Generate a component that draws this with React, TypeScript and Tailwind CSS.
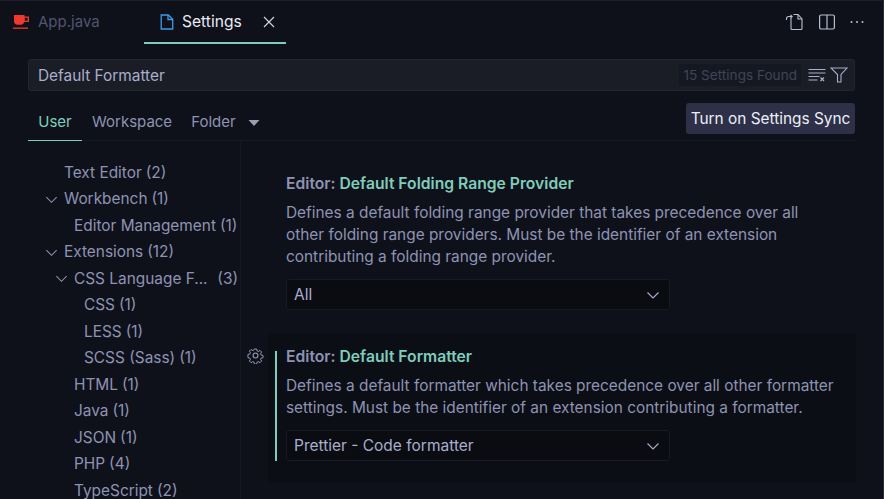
import React from "react";

const tree: [string, string, number, boolean][] = [
  ["Text Editor", "(2)", 64, false],
  ["Workbench", "(1)", 64, true],
  ["Editor Management", "(1)", 74, false],
  ["Extensions", "(12)", 64, true],
  ["CSS Language F...", "(3)", 74, true],
  ["CSS", "(1)", 84, false],
  ["LESS", "(1)", 84, false],
  ["SCSS (Sass)", "(1)", 84, false],
  ["HTML", "(1)", 74, false],
  ["Java", "(1)", 74, false],
  ["JSON", "(1)", 74, false],
  ["PHP", "(4)", 74, false],
  ["TypeScript", "(2)", 74, false],
];

function Chevron({ className = "", style }: { className?: string; style?: React.CSSProperties }) {
  return (
    <svg viewBox="0 0 16 16" className={className} style={style} fill="none" stroke="currentColor" strokeWidth="1.1">
      <path d="M2.5 5.5 8 11l5.5-5.500" />
    </svg>
  );
}

function Select({ label }: { label: string }) {
  return (
    <div className="flex h-[31px] w-[384px] items-center justify-between rounded-[3px] border border-[#171a24] bg-[#0a0c12] pl-[7px] pr-[8px] text-[15.500px] text-[#a9aecb]">
      <span>{label}</span>
      <Chevron className="h-4 w-4 text-[#a9aecb]" />
    </div>
  );
}

export default function App() {
  return (
    <div
      className="flex h-[499px] w-[884px] flex-col overflow-hidden border-t border-r border-t-[#1b1e29] border-r-[#2a2d38] bg-[#0e111a] text-[#8e93b3]"
      style={{ fontFamily: "Inter, 'Noto Sans', sans-serif" }}
    >
      {/* tabs */}
      <div className="flex h-[42px] shrink-0 items-start">
        <div className="flex h-[42px] w-[144px] items-center pl-[13px] text-[15px] text-[#50556f]">
          <svg viewBox="0 0 16 16" className="mr-[9px] h-4 w-4" fill="#f0392b">
            <path d="M1 1h10.500v1.500H16v5.500h-4.700c-.5 1.500-1.800 2.800-3.300 2.800H4.500C2.400 10.800 1 9 1 7.200zM11.800 3.800v3h2.800v-3z" />
            <rect x="0" y="13.500" width="15" height="1.300" />
          </svg>
          <span>App.java</span>
        </div>
        <div className="flex h-[43px] w-[142px] items-center border-b-2 border-[#7fcdbb] pl-[15px] text-[15.600px] text-[#e8eaf4]">
          <svg viewBox="0 0 16 16" className="mr-[7px] h-4 w-4" fill="none" stroke="#3b9be8" strokeWidth="1.300">
            <path d="M2.200 1h7.100l4.400 4.200V15H2.200z" />
            <path d="M9 1v4.500h4.700" />
          </svg>
          <span>Settings</span>
          <svg viewBox="0 0 16 16" className="ml-[19px] h-4 w-4" fill="none" stroke="#d5d8e6" strokeWidth="1.100">
            <path d="M3 3l10 10M13 3 3 13" />
          </svg>
        </div>
        <div className="ml-auto mr-[18px] flex h-[42px] items-center gap-[13px] text-[#b9bdd0]">
          <svg viewBox="0 0 20 20" className="h-[20px] w-[20px]" fill="none" stroke="currentColor" strokeWidth="1.100">
            <path d="M6 6V16.500a1 1 0 0 0 1 1h9a1 1 0 0 0 1-1V7l-4-4.500H8.500" />
            <path d="M13 2.500V7h4" />
            <path d="M1.500 8V6.500a2 2 0 0 1 2-2H7M5.500 2.800 7.200 4.500 5.500 6.200" />
          </svg>
          <svg viewBox="0 0 18 18" className="h-[18px] w-[18px]" fill="none" stroke="currentColor" strokeWidth="1.200">
            <rect x="1.600" y="2" width="14.800" height="14" rx="1.500" />
            <path d="M9 2v14" />
          </svg>
          <svg viewBox="0 0 16 16" className="h-4 w-4" fill="currentColor">
            <circle cx="2.500" cy="8" r="1" />
            <circle cx="8" cy="8" r="1" />
            <circle cx="13.500" cy="8" r="1" />
          </svg>
        </div>
      </div>

      {/* search */}
      <div className="mx-[28px] mt-[16px] flex h-[32px] w-[827px] shrink-0 items-center rounded-[3px] border border-[#23262f] bg-[#1a1d26] pl-[9px] pr-[6px] text-[15.400px] text-[#a9aecb]">
        <span className="pt-[1px]">Default Formatter</span>
        <span className="ml-auto rounded-[2px] bg-[#151821] px-[4px] py-[1px] text-[13.600px] text-[#40445a]">15 Settings Found</span>
        <svg viewBox="0 0 18 16" className="ml-[7px] h-4 w-[18px] text-[#a9aecb]" fill="none" stroke="currentColor" strokeWidth="1.100">
          <path d="M0.500 2.500h17M0.500 6h17M0.500 9.500h11M0.500 13h9" />
          <path d="M12.500 10.500l3.500 3.500M16 10.500 12.500 14" strokeWidth="1.300" />
        </svg>
        <svg viewBox="0 0 18 16" className="ml-[4px] h-4 w-[18px] text-[#a9aecb]" fill="none" stroke="currentColor" strokeWidth="1.100">
          <path d="M1 1h16l-6 6.500V15H7.500V7.500z" />
        </svg>
      </div>

      {/* scope tabs */}
      <div className="mx-[28px] mt-[17px] flex h-[33px] w-[827px] shrink-0 items-start border-b border-[#161923] text-[15px]">
        <div className="flex h-[33px] w-[54px] items-start justify-center border-b border-[#7fcdbb] pt-[3px] text-[#7fcdbb]">User</div>
        <div className="ml-[10px] pt-[3px]">Workspace</div>
        <div className="ml-[19px] pt-[3px]">Folder</div>
        <svg viewBox="0 0 12 6" className="ml-[12px] mt-[12px] h-[6px] w-[12px]" fill="#9a9db3">
          <path d="M0.500 0h11L6 6z" />
        </svg>
        <div className="ml-auto -mt-[5px] flex h-[31px] w-[169px] items-center justify-center rounded-[3px] bg-[#2d3047] text-[15.400px] text-[#eceef8]">
          Turn on Settings Sync
        </div>
      </div>

      {/* body */}
      <div className="flex min-h-0 flex-1 text-[15.400px]">
        <div className="w-[241px] shrink-0 overflow-hidden border-r border-[#141722] pt-[18px]">
          {tree.map(([name, count, left, open]) => (
            <div key={name} className="relative flex h-[26.500px] w-[240px] items-center" style={{ paddingLeft: left }}>
              {open && <Chevron className="absolute top-[6px] h-[15px] w-[15px]" style={{ left: left - 20 }} />}
              <span className="whitespace-pre">{name}</span>
              <span className={name.startsWith("CSS L") ? "ml-auto pr-[2px]" : "ml-[4px]"}>{count}</span>
            </div>
          ))}
        </div>
        <div className="min-w-0 flex-1 pl-[27px] pr-[27px] pt-[32px]">
          <div className="pl-[18px]">
            <div className="h-[22px] text-[15.700px] font-semibold leading-[22px]">
              Editor: <span className="text-[#7fcdbb]">Default Folding Range Provider</span>
            </div>
            <p className="mt-[7px] w-[530px] leading-[22px]">
              Defines a default folding range provider that takes precedence over all other folding range providers. Must be the identifier of an extension contributing a folding range provider.
            </p>
            <div className="mt-[11px]">
              <Select label="All" />
            </div>
          </div>
          <div className="relative mt-[23px] h-[150px] bg-[#0b0e15] pl-[7px] pt-[18px]">
            <svg viewBox="0 0 16 16" className="absolute -left-[21px] top-[14px] h-[17px] w-[17px] text-[#9a9db8]" fill="none" stroke="currentColor" strokeWidth="1">
              <circle cx="8" cy="8" r="2.300" />
              <path d="M6.800 1.200h2.400l.4 2 1.300.6 1.800-1.100 1.700 1.700-1.100 1.800.6 1.300 2 .4v2.400l-2 .4-.6 1.300 1.100 1.800-1.700 1.700-1.800-1.100-1.300.6-.4 2H6.800l-.4-2-1.300-.6-1.800 1.100-1.700-1.700 1.100-1.800-.6-1.300-2-.4V6.900l2-.4.6-1.300-1.100-1.800 1.700-1.700 1.800 1.100 1.300-.6z" transform="translate(0.800 0.800) scale(0.900)" />
            </svg>
            <div className="border-l-2 border-[#7fcdbb] pl-[9px]">
              <div className="h-[12px] text-[15.700px] font-semibold leading-[12px]">
                Editor: <span className="text-[#7fcdbb]">Default Formatter</span>
              </div>
              <p className="mt-[12px] w-[556px] leading-[22px]">
                Defines a default formatter which takes precedence over all other formatter settings. Must be the identifier of an extension contributing a formatter.
              </p>
              <div className="mt-[11px]">
                <Select label="Prettier - Code formatter" />
              </div>
            </div>
          </div>
        </div>
      </div>
    </div>
  );
}
